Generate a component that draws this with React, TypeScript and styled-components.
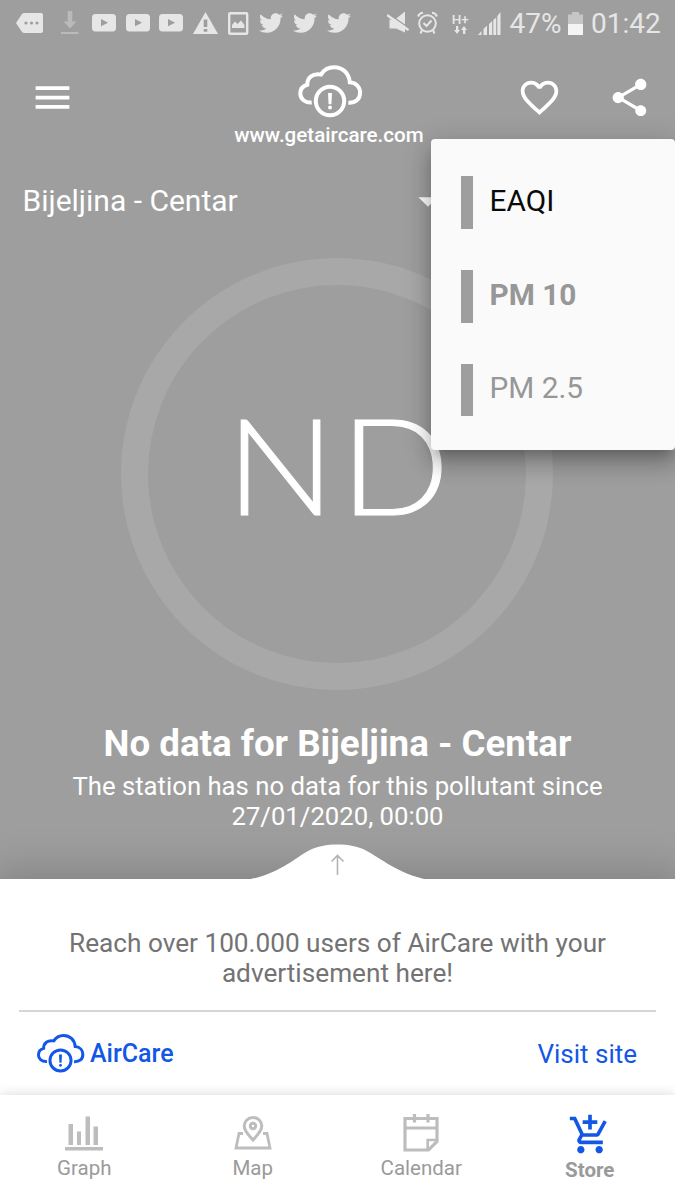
import React from "react";
import styled, { createGlobalStyle } from "styled-components";
import {
  MdAddShoppingCart,
  MdArrowDropDown,
  MdFavoriteBorder,
  MdMenu,
  MdShare,
} from "react-icons/md";
import { FaTwitter } from "react-icons/fa";

const GlobalStyle = createGlobalStyle`
  * { box-sizing: border-box; }
  body { margin: 0; background: #9e9e9e; font-family: Roboto, "Liberation Sans", sans-serif; }
  svg { display: block; flex: none; }
`;

const Screen = styled.main`
  position: relative;
  display: flex;
  flex-direction: column;
  width: 675px;
  height: 1200px;
  overflow: hidden;
  background: #9e9e9e;
  color: #fff;
`;

const StatusBar = styled.div`
  display: flex;
  align-items: center;
  justify-content: space-between;
  height: 46px;
  padding: 0 15px 0 16px;
  color: #e6e6e6;
`;

const StatusGroup = styled.div<{ $gap: number }>`
  display: flex;
  align-items: center;
  gap: ${(p) => p.$gap}px;
`;

const StatusText = styled.span<{ $width: number }>`
  width: ${(p) => p.$width}px;
  padding-top: 2px;
  font-size: 28px;
  line-height: 44px;
  white-space: nowrap;
`;

const AppBar = styled.header`
  display: grid;
  grid-template-columns: 200px 200px 1fr;
  height: 104px;
  padding: 18px 23px 0 30px;
`;

const Brand = styled.div`
  display: flex;
  flex-direction: column;
  align-items: center;
`;

const BrandUrl = styled.span`
  margin: 5px 2px 0 0;
  font-size: 20.6px;
  font-weight: 500;
  line-height: 24px;
`;

const BarSide = styled.div<{ $end?: boolean }>`
  display: flex;
  justify-content: ${(p) => (p.$end ? "flex-end" : "flex-start")};
  gap: 45px;
  padding-top: 11px;
`;

const StationPicker = styled.div`
  display: flex;
  align-items: center;
  justify-content: space-between;
  width: 451px;
  height: 102px;
  padding-left: 22.5px;
  font-size: 30px;
`;

const StationName = styled.span`
  padding-bottom: 2px;
`;

const Dial = styled.div`
  display: flex;
  align-items: center;
  justify-content: center;
  align-self: center;
  width: 432px;
  height: 432px;
  margin-top: 6px;
  margin-left: -0.5px;
  border: 27.5px solid #a8a8a8;
  border-radius: 50%;
`;

const Reading = styled.span`
  padding: 0 0 22px 7px;
  font-family: Lato, "Open Sans", sans-serif;
  font-size: 135px;
  font-weight: 300;
  line-height: 1;
  letter-spacing: 5px;
  transform: scaleX(1.065);
  -webkit-text-stroke: 1px #fff;
`;

const Message = styled.section`
  height: 189px;
  padding-top: 33px;
  text-align: center;
`;

const MessageTitle = styled.h1`
  margin: 0;
  font-size: 36.7px;
  font-weight: 700;
  line-height: 42px;
`;

const MessageText = styled.p`
  width: 580px;
  margin: 6px auto 0;
  font-size: 25.7px;
  line-height: 30px;
`;

const Sheet = styled.section`
  position: relative;
  height: 216px;
  padding: 49px 19px 0;
  background: #fff;
  box-shadow: 0 0 40px 8px rgba(0, 0, 0, 0.18);
`;

const SheetHandle = styled.svg`
  position: absolute;
  left: 247px;
  top: -36px;
`;

const AdText = styled.p`
  margin: 0 auto;
  padding-bottom: 22px;
  border-bottom: 2px solid #d6d6d6;
  color: #737373;
  font-size: 26.2px;
  line-height: 30px;
  text-align: center;
`;

const AdFooter = styled.div`
  display: flex;
  align-items: center;
  justify-content: space-between;
  height: 83px;
  padding: 0 19px 0 17px;
  color: #1257e6;
`;

const AdBrand = styled.div`
  display: flex;
  align-items: center;
  gap: 5px;
  font-size: 25px;
  font-weight: 500;
`;

const AdLink = styled.a`
  font-size: 26px;
`;

const NavBar = styled.nav`
  position: relative;
  display: grid;
  grid-template-columns: repeat(4, 1fr);
  height: 105px;
  padding-right: 1px;
  background: #fff;
  box-shadow: 0 0 12px rgba(0, 0, 0, 0.16);
`;

const NavItem = styled.div<{ $active?: boolean }>`
  display: flex;
  flex-direction: column;
  align-items: center;
  padding-top: 18px;
  color: ${(p) => (p.$active ? "#1257e6" : "#bdbdbd")};
`;

const NavLabel = styled.span<{ $active?: boolean }>`
  margin-top: ${(p) => (p.$active ? 1 : 3)}px;
  color: #9a9a9a;
  font-size: 20.5px;
  font-weight: ${(p) => (p.$active ? 700 : 400)};
  line-height: 24px;
`;

const Menu = styled.ul`
  position: absolute;
  left: 431px;
  top: 139px;
  display: flex;
  flex-direction: column;
  gap: 41px;
  width: 244px;
  height: 311px;
  margin: 0;
  padding: 37px 30px 0;
  border-radius: 4px;
  background: #fafafa;
  box-shadow:
    0 9px 11px -5px rgba(0, 0, 0, 0.2),
    0 15px 19px 2px rgba(0, 0, 0, 0.14),
    0 6px 28px 4px rgba(0, 0, 0, 0.14);
  list-style: none;
`;

const MenuItem = styled.li<{ $color: string; $bold?: boolean }>`
  display: flex;
  flex: none;
  align-items: center;
  height: 52.8px;
  padding: 0 0 4px 16.500px;
  border-left: 12px solid #9e9e9e;
  color: ${(p) => p.$color};
  font-size: 29.8px;
  font-weight: ${(p) => (p.$bold ? 700 : 400)};
`;

const CloudIcon = ({ width, stroke = 4 }: { width: number; stroke?: number }) => (
  <svg width={width} height={(width * 54) / 66} viewBox="0 0 66 54" fill="none" stroke="currentColor" strokeWidth={stroke}>
    <path d="M14.7 38.5C8 39 3.3 35 3.3 29.500C3.300 25 6.200 21.800 10.300 20.700C10.200 13.500 15.500 9.200 24 10.600C27 5.600 31.500 3.300 37 3.300C45.500 3.300 52 9 52.800 18.300C59.500 18.800 63.100 23.500 63.100 28.800C63.100 35.300 58.500 39 51.300 38.700" />
    <circle cx="33" cy="37" r="14.200" />
    <path fill="currentColor" stroke="none" d="M31 29H35L34.400 40.200H31.600Z" />
    <circle cx="33" cy="43.600" r="2" fill="currentColor" stroke="none" />
  </svg>
);

const MoreTagIcon = () => (
  <svg width="28" height="22" viewBox="0 0 28 22">
    <path fill="currentColor" d="M0 11L6 2Q7 1 8.500 1H25Q27 1 27 3V19Q27 21 25 21H8.500Q7 21 6 20Z" />
    <g fill="#9e9e9e">
      <circle cx="10" cy="11" r="1.600" />
      <circle cx="15.500" cy="11" r="1.600" />
      <circle cx="21" cy="11" r="1.600" />
    </g>
  </svg>
);

const DownloadIcon = () => (
  <svg width="18" height="24" viewBox="0 0 18 24" fill="#bababa">
    <path d="M6.700 0H11.300V10.500H15.500L9 17.500L2.500 10.500H6.700ZM0 21H17.500V23H0Z" />
  </svg>
);

const VideoIcon = () => (
  <svg width="24" height="18" viewBox="0 0 24 18">
    <rect width="24" height="17.500" rx="3.500" fill="currentColor" />
    <path d="M9 5L16 8.700L9 12.300Z" fill="#9e9e9e" />
  </svg>
);

const WarningIcon = () => (
  <svg width="25" height="22" viewBox="0 0 25 22">
    <path d="M12.500 0L25 22H0Z" fill="currentColor" />
    <path d="M10.700 7.500H14.300V15H10.700ZM10.700 17H14.300V19.700H10.700Z" fill="#9e9e9e" />
  </svg>
);

const PictureIcon = () => (
  <svg width="22" height="23" viewBox="0 0 22 23">
    <rect x="1.200" y="1.300" width="18" height="20.400" rx="1" fill="none" stroke="currentColor" strokeWidth="2.400" />
    <path d="M4 16V13L7 9.500L9.500 12L13 8.500L16.500 13V16Z" fill="currentColor" />
  </svg>
);

const MuteIcon = () => (
  <svg width="22" height="24" viewBox="0 0 22 24">
    <path d="M2.500 8.500H8L18 0.500V21.500L9 17.500H2.500Z" fill="currentColor" />
    <path d="M1.500 2.800L22 17" stroke="#9e9e9e" strokeWidth="1.400" />
    <path d="M0 4L21.500 19" stroke="currentColor" strokeWidth="2.400" />
  </svg>
);

const AlarmIcon = () => (
  <svg width="21" height="24" viewBox="0 0 21 24" fill="none" stroke="currentColor" strokeWidth="2">
    <circle cx="10.500" cy="12.500" r="8.300" />
    <path d="M1 5.500Q2.500 2 6 1.800M15 1.800Q18.500 2 20 5.500M6.500 12L9.500 15L14.500 9.500M5 19L3.500 22.500M16 19L17.500 22.500" />
  </svg>
);

const NetworkBox = styled.div`
  display: flex;
  flex-direction: column;
  align-items: center;
  width: 17px;
  margin: 0 1px 0 -3px;
  font-size: 13.5px;
  font-weight: 500;
  line-height: 13px;
`;

const Network = () => (
  <NetworkBox>
    <span>H+</span>
    <svg width="13" height="8" viewBox="0 0 13 8" fill="currentColor">
      <path d="M2 0H4.300V4H6L3.100 8L0 4H2ZM9 8H11.300V4H13L10 0L7 4H9Z" />
    </svg>
  </NetworkBox>
);

const SignalIcon = () => (
  <svg width="23" height="23" viewBox="0 0 23 23" fill="currentColor">
    <path d="M0 23L3.500 19V23ZM5.500 17L9 13.500V23H5.500ZM11 12L14.200 9V23H11ZM15.300 8L18.200 5.500V23H15.300ZM19.300 4L22.500 0V23H19.300Z" />
  </svg>
);

const BatteryIcon = () => (
  <svg width="15" height="23" viewBox="0 0 15 23">
    <path d="M0 2.500H4V0H11V2.500H15V12H0Z" fill="#c6c6c6" />
    <path d="M0 12H15V23H0Z" fill="#f4f4f4" />
  </svg>
);

const GraphIcon = () => (
  <svg width="38" height="40" viewBox="0 0 38 40" fill="currentColor">
    <path d="M3.500 11H8V32H3.500ZM12 18.500H16V32H12ZM20.500 3.500H25V32H20.500ZM28.500 13.500H33V32H28.500ZM0 34H38V37.500H0Z" />
  </svg>
);

const MapIcon = () => (
  <svg width="38" height="40" viewBox="0 0 38 40" fill="none" stroke="currentColor" strokeWidth="3">
    <path d="M9 20.500H5L2 35H36L33 20.500H29" strokeWidth="2.800" />
    <path d="M19 27C15 22.500 10.200 18 10.200 13A8.800 8.500 0 0 1 27.800 13C27.800 18 23 22.500 19 27Z" />
    <circle cx="19" cy="13" r="2.700" />
  </svg>
);

const CalendarIcon = () => (
  <svg width="36" height="40" viewBox="0 0 36 40" fill="none" stroke="currentColor" strokeWidth="3.200">
    <path d="M2 5.500H34V28.500L25.500 37H2ZM2 15H34" />
    <path d="M24.700 37V27H34" strokeWidth="2.600" />
    <path d="M11.500 1V9.500M25 1V9.500" />
  </svg>
);

const menuItems = [
  { label: "EAQI", color: "#0a0a0a" },
  { label: "PM 10", color: "#979797", bold: true },
  { label: "PM 2.5", color: "#979797" },
];

const navItems = [
  { label: "Graph", icon: <GraphIcon /> },
  { label: "Map", icon: <MapIcon /> },
  { label: "Calendar", icon: <CalendarIcon /> },
  { label: "Store", icon: <MdAddShoppingCart size={44} />, active: true },
];

export default function App() {
  return (
    <Screen>
      <GlobalStyle />
      <StatusBar>
        <StatusGroup $gap={13}>
          <StatusGroup $gap={17}>
            <MoreTagIcon />
            <DownloadIcon />
          </StatusGroup>
          <StatusGroup $gap={9.7}>
            <VideoIcon />
            <VideoIcon />
            <VideoIcon />
            <WarningIcon />
            <PictureIcon />
            <FaTwitter size={24} />
            <FaTwitter size={24} />
            <FaTwitter size={24} />
          </StatusGroup>
        </StatusGroup>
        <StatusGroup $gap={8.3}>
          <MuteIcon />
          <AlarmIcon />
          <span />
          <Network />
          <SignalIcon />
          <StatusText $width={50}>47%</StatusText>
          <BatteryIcon />
          <StatusText $width={69}>01:42</StatusText>
        </StatusGroup>
      </StatusBar>

      <AppBar>
        <BarSide>
          <MdMenu size={45} />
        </BarSide>
        <Brand>
          <CloudIcon width={66} />
          <BrandUrl>www.getaircare.com</BrandUrl>
        </Brand>
        <BarSide $end>
          <MdFavoriteBorder size={45} />
          <MdShare size={45} />
        </BarSide>
      </AppBar>

      <StationPicker>
        <StationName>Bijeljina - Centar</StationName>
        <MdArrowDropDown size={46} />
      </StationPicker>

      <Dial>
        <Reading>ND</Reading>
      </Dial>

      <Message>
        <MessageTitle>No data for Bijeljina - Centar</MessageTitle>
        <MessageText>The station has no data for this pollutant since 27/01/2020, 00:00</MessageText>
      </Message>

      <Sheet>
        <SheetHandle width="181" height="37" viewBox="0 0 181 37">
          <path d="M0 37C34 30 46 16 63 7C76 -0.500 105 -0.500 118 7C135 16 150 30 181 37Z" fill="#fff" />
          <path d="M90.500 32V13M84.500 18.500L90.500 12.500L96.500 18.500" fill="none" stroke="#b4b4b4" strokeWidth="1.600" />
        </SheetHandle>
        <AdText>
          Reach over 100.000 users of AirCare with your
          <br />
          advertisement here!
        </AdText>
        <AdFooter>
          <AdBrand>
            <CloudIcon width={49} />
            AirCare
          </AdBrand>
          <AdLink>Visit site</AdLink>
        </AdFooter>
      </Sheet>

      <NavBar>
        {navItems.map((item) => (
          <NavItem key={item.label} $active={item.active}>
            {item.icon}
            <NavLabel $active={item.active}>{item.label}</NavLabel>
          </NavItem>
        ))}
      </NavBar>

      <Menu>
        {menuItems.map((item) => (
          <MenuItem key={item.label} $color={item.color} $bold={item.bold}>
            {item.label}
          </MenuItem>
        ))}
      </Menu>
    </Screen>
  );
}
